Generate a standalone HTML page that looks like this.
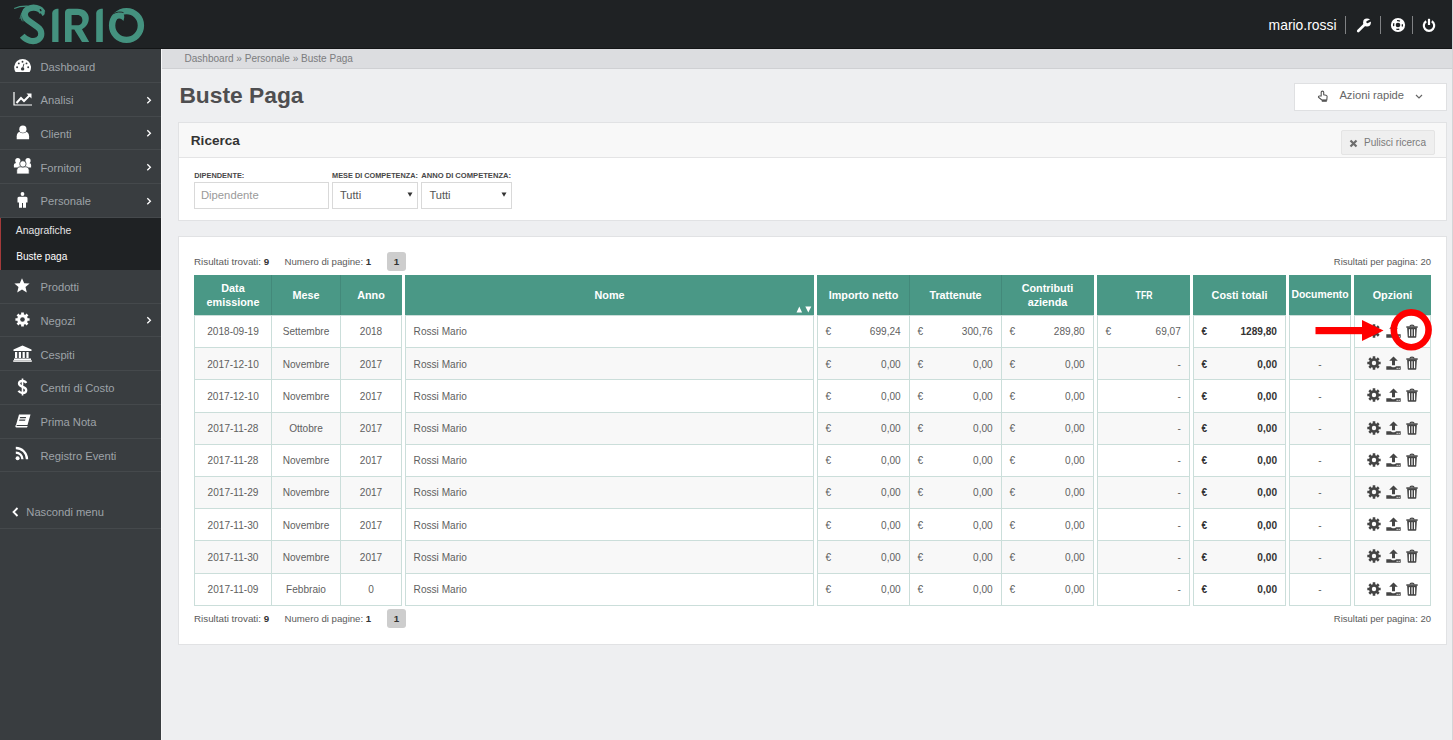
<!DOCTYPE html>
<html><head><meta charset="utf-8"><title>Buste Paga</title>
<style>
html,body{margin:0;padding:0;}
body{width:1453px;height:740px;overflow:hidden;position:relative;background:#eeeff1;font-family:"Liberation Sans", sans-serif;}
.t{position:absolute;white-space:nowrap;}
.r{position:absolute;display:block;}
</style></head><body>
<div class="r" style="left:0px;top:0px;width:1452px;height:48px;background:#1f2224"></div>
<div class="r" style="left:0px;top:48px;width:1452px;height:1px;background:#131516"></div>
<div class="r" style="left:1452px;top:0px;width:1px;height:740px;background:#d4d5d7"></div>
<div class="r" style="left:0px;top:49px;width:161px;height:691px;background:#393d40"></div>
<div class="r" style="left:161px;top:49px;width:1px;height:691px;background:#f7f7f8"></div>
<div class="r" style="left:162px;top:49px;width:1290px;height:19px;background:#dcdde0"></div>
<div class="r" style="left:162px;top:68px;width:1290px;height:1px;background:#cfd0d3"></div>
<svg class="r" style="left:0px;top:0px;" width="160" height="48" viewBox="0 0 160 48">
<path d="M42.5 12.5 C40.5 7.5 33 6.5 28.5 8.8 C23.5 11.3 23.8 17 28 20.3 L37.8 27.3 C42.3 30.6 42.5 36.8 38.2 39.6 C33.5 42.5 26.5 40.8 22.2 35.8" fill="none" stroke="#44927f" stroke-width="6.2"/>
<path d="M37.5 7.2 C41 6.2 44.8 9 44.8 12.8 C44.8 14.5 43.6 15.8 42.4 15.9 C41.2 13.5 39.8 11.8 37.8 10.8 Z" fill="#44927f"/>
<ellipse cx="40.6" cy="10.2" rx="0.8" ry="1.3" fill="#1f2224" transform="rotate(-30 40.6 10.2)"/>
<path d="M14.2 8.6 C18 6.8 23 6 28 6.2" fill="none" stroke="#44927f" stroke-width="1.1"/>
<path d="M25 9 C22 11 21 15 21.5 20.5 M23.5 11 C21.5 13 20.5 16 20 19 M24.5 13.5 C23 16 22.8 18.5 23 21.5" fill="none" stroke="#44927f" stroke-width="1" opacity="0.8"/>
<path d="M52.2 42 L52.2 13.5 C52.2 10.5 54.5 8.8 58.5 8.8 L58.5 42 Z" fill="#44927f"/>
<path fill-rule="evenodd" d="M65 42 L65 12.5 C65 10.3 66.6 8.8 68.8 8.8 L77.5 8.8 C84.5 8.8 88.8 13 88.8 18.3 C88.8 23.3 86.3 27 82 29.3 L89.2 42 L82 42 L74.3 29.5 L71.6 29.5 L71.6 42 Z M71.6 15 L77.3 15 C80.6 15 82.4 17.3 82.4 20.2 C82.4 23.2 80.4 25.3 77.3 25.3 L71.6 25.3 Z" fill="#44927f"/>
<path d="M96.2 42 L96.2 13.5 C96.2 10.5 98.5 8.8 102.8 8.8 L102.8 42 Z" fill="#44927f"/>
<circle cx="126.5" cy="25.5" r="14.4" fill="none" stroke="#44927f" stroke-width="6.4"/>
<path d="M112.3 17.5 C114.5 13.2 119.5 12 122.8 13.6 C124.8 14.6 124.6 18.5 123.3 21 C122 18.3 118.8 17.6 115.8 19.6 Z" fill="#44927f"/>
<path d="M113.2 13.8 C116.5 11.8 120.5 11.6 123.5 12.6" fill="none" stroke="#1f2224" stroke-width="0.9"/>
</svg>
<div class="t" style="left:1268.60px;top:19.03px;font-size:13.9px;line-height:13.9px;color:#ffffff;">mario.rossi</div>
<div class="r" style="left:1345px;top:16px;width:1px;height:18px;background:#808284"></div>
<div class="r" style="left:1380px;top:16px;width:1px;height:18px;background:#808284"></div>
<div class="r" style="left:1412px;top:16px;width:1px;height:18px;background:#808284"></div>
<svg class="r" style="left:1356px;top:17px;" width="16" height="16" viewBox="0 0 16 16"><path d="M2.2 14 L9.5 6.8" stroke="#fff" stroke-width="2.6" stroke-linecap="round"/><circle cx="11" cy="5.5" r="3.9" fill="#fff"/><path d="M11.5 5 L15.5 3" stroke="#1f2224" stroke-width="2.4" stroke-linecap="round"/></svg>
<svg class="r" style="left:1390px;top:17px;" width="16" height="16" viewBox="0 0 16 16"><circle cx="8" cy="8" r="7.1" fill="#fff"/><circle cx="8" cy="8" r="4.4" fill="none" stroke="#1f2224" stroke-width="1.3" stroke-dasharray="3 3.91" stroke-dashoffset="1.5"/><circle cx="8" cy="8" r="2.3" fill="#1f2224"/></svg>
<svg class="r" style="left:1422px;top:18px;" width="14" height="14" viewBox="0 0 14 14"><path d="M4.2 3.2 A5.2 5.2 0 1 0 9.8 3.2" fill="none" stroke="#fff" stroke-width="2.2"/><path d="M7 0.8 L7 7" stroke="#fff" stroke-width="2.2"/></svg>
<div class="t" style="left:40.50px;top:61.52px;font-size:11.2px;line-height:11.2px;color:#9ea3a8;">Dashboard</div>
<div class="r" style="left:0px;top:82px;width:161px;height:1px;background:#45494c"></div>
<div class="t" style="left:40.50px;top:95.22px;font-size:11.2px;line-height:11.2px;color:#9ea3a8;">Analisi</div>
<div class="r" style="left:0px;top:116px;width:161px;height:1px;background:#45494c"></div>
<svg class="r" style="left:146px;top:96px;" width="6" height="8" viewBox="0 0 6 8"><path d="M1.3 1.2 L4.4 4.2 L1.3 7.2" fill="none" stroke="#fff" stroke-width="1.3"/></svg>
<div class="t" style="left:40.50px;top:128.92px;font-size:11.2px;line-height:11.2px;color:#9ea3a8;">Clienti</div>
<div class="r" style="left:0px;top:149px;width:161px;height:1px;background:#45494c"></div>
<svg class="r" style="left:146px;top:129px;" width="6" height="8" viewBox="0 0 6 8"><path d="M1.3 1.2 L4.4 4.2 L1.3 7.2" fill="none" stroke="#fff" stroke-width="1.3"/></svg>
<div class="t" style="left:40.50px;top:162.62px;font-size:11.2px;line-height:11.2px;color:#9ea3a8;">Fornitori</div>
<div class="r" style="left:0px;top:183px;width:161px;height:1px;background:#45494c"></div>
<svg class="r" style="left:146px;top:163px;" width="6" height="8" viewBox="0 0 6 8"><path d="M1.3 1.2 L4.4 4.2 L1.3 7.2" fill="none" stroke="#fff" stroke-width="1.3"/></svg>
<div class="t" style="left:40.50px;top:196.32px;font-size:11.2px;line-height:11.2px;color:#9ea3a8;">Personale</div>
<div class="r" style="left:0px;top:217px;width:161px;height:1px;background:#45494c"></div>
<svg class="r" style="left:146px;top:197px;" width="6" height="8" viewBox="0 0 6 8"><path d="M1.3 1.2 L4.4 4.2 L1.3 7.2" fill="none" stroke="#fff" stroke-width="1.3"/></svg>
<div class="t" style="left:40.50px;top:282.22px;font-size:11.2px;line-height:11.2px;color:#9ea3a8;">Prodotti</div>
<div class="r" style="left:0px;top:303px;width:161px;height:1px;background:#45494c"></div>
<div class="t" style="left:40.50px;top:315.92px;font-size:11.2px;line-height:11.2px;color:#9ea3a8;">Negozi</div>
<div class="r" style="left:0px;top:336px;width:161px;height:1px;background:#45494c"></div>
<svg class="r" style="left:146px;top:316px;" width="6" height="8" viewBox="0 0 6 8"><path d="M1.3 1.2 L4.4 4.2 L1.3 7.2" fill="none" stroke="#fff" stroke-width="1.3"/></svg>
<div class="t" style="left:40.50px;top:349.62px;font-size:11.2px;line-height:11.2px;color:#9ea3a8;">Cespiti</div>
<div class="r" style="left:0px;top:370px;width:161px;height:1px;background:#45494c"></div>
<div class="t" style="left:40.50px;top:383.32px;font-size:11.2px;line-height:11.2px;color:#9ea3a8;">Centri di Costo</div>
<div class="r" style="left:0px;top:404px;width:161px;height:1px;background:#45494c"></div>
<div class="t" style="left:40.50px;top:417.02px;font-size:11.2px;line-height:11.2px;color:#9ea3a8;">Prima Nota</div>
<div class="r" style="left:0px;top:438px;width:161px;height:1px;background:#45494c"></div>
<div class="t" style="left:40.50px;top:450.72px;font-size:11.2px;line-height:11.2px;color:#9ea3a8;">Registro Eventi</div>
<div class="r" style="left:0px;top:471px;width:161px;height:1px;background:#45494c"></div>
<div class="r" style="left:0px;top:218px;width:161px;height:52px;background:#1f2224"></div>
<div class="r" style="left:0px;top:218px;width:1px;height:52px;background:#a33a3a"></div>
<div class="t" style="left:15.80px;top:226.10px;font-size:10.4px;line-height:10.4px;color:#e4e4e4;">Anagrafiche</div>
<div class="t" style="left:16.20px;top:252.25px;font-size:10.1px;line-height:10.1px;color:#ffffff;">Buste paga</div>
<div class="t" style="left:26.30px;top:507.02px;font-size:11.2px;line-height:11.2px;color:#9ea3a8;">Nascondi menu</div>
<svg class="r" style="left:12px;top:507px;" width="7" height="10" viewBox="0 0 7 10"><path d="M5.5 1 L1.5 5 L5.5 9" fill="none" stroke="#fff" stroke-width="1.8"/></svg>
<div class="r" style="left:0px;top:528px;width:161px;height:1px;background:#45494c"></div>
<svg class="r" style="left:14px;top:59px;" width="18" height="14" viewBox="0 0 18 14"><path d="M1.57 13 A8.4 8.4 0 1 1 15.63 13 Z" fill="#ffffff"/><circle cx="8.5" cy="2.7" r="0.95" fill="#393d40"/><circle cx="4.8" cy="4.4" r="0.95" fill="#393d40"/><circle cx="12.5" cy="4.4" r="0.95" fill="#393d40"/><circle cx="3.1" cy="8.2" r="0.95" fill="#393d40"/><circle cx="14.2" cy="8.2" r="0.95" fill="#393d40"/><path d="M8.6 9.9 L9.9 4.8" stroke="#393d40" stroke-width="0.9"/><circle cx="8.6" cy="9.9" r="1.7" fill="#393d40"/></svg>
<svg class="r" style="left:13px;top:92px;" width="20" height="14" viewBox="0 0 20 14"><path d="M1 0 L1 13 L19 13" fill="none" stroke="#ffffff" stroke-width="1.2"/><path d="M3.5 11 L8 6 L11 9 L16.5 3.5" fill="none" stroke="#ffffff" stroke-width="2"/><path d="M13.5 1.5 L18.5 1.5 L18.5 6.5 Z" fill="#ffffff"/></svg>
<svg class="r" style="left:16px;top:125px;" width="14" height="15" viewBox="0 0 14 15"><path d="M0.7 14.2 L0.7 11.2 C0.7 8.3 2.6 6.6 5 6.6 L8.8 6.6 C11.2 6.6 13.1 8.3 13.1 11.2 L13.1 14.2 Z" fill="#ffffff"/><circle cx="6.9" cy="4.2" r="4.1" fill="#393d40"/><circle cx="6.9" cy="4.2" r="3.6" fill="#ffffff"/></svg>
<svg class="r" style="left:13px;top:157px;" width="19" height="18" viewBox="0 0 19 18"><circle cx="4.8" cy="3.7" r="2.6" fill="#ffffff"/><circle cx="15" cy="3.7" r="2.6" fill="#ffffff"/><path d="M0.9 10.5 L0.9 8.3 C0.9 6.8 2 6 3.2 6 L16 6 C17.2 6 18.1 6.8 18.1 8.3 L18.1 10.5 Z" fill="#ffffff"/><path d="M3.7 17 L3.7 13.5 C3.7 11.2 5.2 9.8 7.2 9.8 L12.7 9.8 C14.7 9.8 16.2 11.2 16.2 13.5 L16.2 17 Z" fill="#ffffff" stroke="#393d40" stroke-width="0.8"/><circle cx="9.9" cy="6.9" r="3.2" fill="#ffffff" stroke="#393d40" stroke-width="0.8"/></svg>
<svg class="r" style="left:17px;top:192px;" width="11" height="16" viewBox="0 0 11 16"><circle cx="5.5" cy="2" r="1.9" fill="#ffffff"/><path d="M2 4.8 L9 4.8 C10 4.8 10.5 5.5 10.5 6.5 L10.5 10.5 L9 10.5 L9 15.8 L6 15.8 L6 11 L5 11 L5 15.8 L2 15.8 L2 10.5 L0.5 10.5 L0.5 6.5 C0.5 5.5 1 4.8 2 4.8 Z" fill="#ffffff"/></svg>
<svg class="r" style="left:14px;top:278px;" width="16" height="15" viewBox="0 0 16 15"><path d="M8 0.3 L10.2 5.2 L15.6 5.6 L11.5 9.1 L12.8 14.5 L8 11.6 L3.2 14.5 L4.5 9.1 L0.4 5.6 L5.8 5.2 Z" fill="#ffffff"/></svg>
<svg class="r" style="left:15px;top:312px;" width="15" height="15" viewBox="0 0 15 15"><path d="M12.62 6.14 L14.57 6.14 L14.57 8.86 L12.62 8.86 L12.40 9.53 L12.09 10.16 L13.46 11.54 L11.54 13.46 L10.16 12.09 L9.53 12.40 L8.86 12.62 L8.86 14.57 L6.14 14.57 L6.14 12.62 L5.47 12.40 L4.84 12.09 L3.46 13.46 L1.54 11.54 L2.91 10.16 L2.60 9.53 L2.38 8.86 L0.43 8.86 L0.43 6.14 L2.38 6.14 L2.60 5.47 L2.91 4.84 L1.54 3.46 L3.46 1.54 L4.84 2.91 L5.47 2.60 L6.14 2.38 L6.14 0.43 L8.86 0.43 L8.86 2.38 L9.53 2.60 L10.16 2.91 L11.54 1.54 L13.46 3.46 L12.09 4.84 L12.40 5.47 Z" fill="#ffffff"/><circle cx="7.5" cy="7.5" r="2.3" fill="#393d40"/></svg>
<svg class="r" style="left:13px;top:345px;" width="19" height="17" viewBox="0 0 19 17"><path d="M9.5 0.5 L18.5 4.5 L18.5 6 L0.5 6 L0.5 4.5 Z" fill="#ffffff"/><rect x="2" y="7" width="2.2" height="6" fill="#ffffff"/><rect x="5.8" y="7" width="2.2" height="6" fill="#ffffff"/><rect x="9.6" y="7" width="2.2" height="6" fill="#ffffff"/><rect x="13.4" y="7" width="2.2" height="6" fill="#ffffff"/><rect x="1" y="13.5" width="17" height="1.5" fill="#ffffff"/><rect x="0.2" y="15.3" width="18.6" height="1.5" fill="#ffffff"/></svg>
<svg class="r" style="left:17px;top:378px;" width="11" height="18" viewBox="0 0 11 18"><path d="M5.5 0.5 L5.5 17.5" stroke="#ffffff" stroke-width="1.6"/><path d="M9.2 5 C8.5 3.5 7.2 2.8 5.5 2.8 C3.3 2.8 2 4 2 5.6 C2 7.4 3.5 8.1 5.5 8.8 C7.7 9.5 9.2 10.3 9.2 12.2 C9.2 13.9 7.7 15 5.5 15 C3.7 15 2.3 14.2 1.5 12.8" fill="none" stroke="#ffffff" stroke-width="2.3"/></svg>
<svg class="r" style="left:15px;top:414px;" width="16" height="14" viewBox="0 0 16 14"><path d="M4 0.5 L15.5 0.5 L12.5 11 L1 11 Z" fill="#ffffff"/><path d="M1 11 C0 11.5 0.2 13.5 1.5 13.5 L12 13.5 L12.7 12 L2 12 C1.5 12 1.4 11.3 1.8 11 Z" fill="#ffffff"/><rect x="6" y="3" width="6" height="1.3" fill="#393d40" transform="skewX(-16)"/><rect x="6" y="5.5" width="6" height="1.3" fill="#393d40" transform="skewX(-16)"/></svg>
<svg class="r" style="left:15px;top:446px;" width="15" height="15" viewBox="0 0 15 15"><circle cx="2.6" cy="12.3" r="2" fill="#ffffff"/><path d="M0.8 6.6 A6.6 6.6 0 0 1 7.4 13.2" fill="none" stroke="#ffffff" stroke-width="2.3"/><path d="M0.8 2 A11.2 11.2 0 0 1 12 13.2" fill="none" stroke="#ffffff" stroke-width="2.3"/></svg>
<div class="t" style="left:179.40px;top:84.40px;font-size:22.8px;line-height:22.8px;color:#4e4e50;font-weight:bold;">Buste Paga</div>
<div class="t" style="left:184.50px;top:53.50px;font-size:10.04px;line-height:10.04px;color:#7b7c7e;">Dashboard » Personale » Buste Paga</div>
<div class="r" style="left:1294px;top:83px;width:153px;height:28px;background:#fff;border:1px solid #dfe0e2;box-sizing:border-box"></div>
<div class="t" style="left:1339.40px;top:90.42px;font-size:11.2px;line-height:11.2px;color:#666;">Azioni rapide</div>
<svg class="r" style="left:1316px;top:89px;" width="14" height="14" viewBox="0 0 14 14"><path d="M5.2 7 L5.2 3.2 C5.2 1.8 7.7 1.8 7.7 3.2 L7.7 5.8 L10 6.2 C10.8 6.4 11.1 6.8 11.1 7.6 L10.8 11 L5.8 11 L2.8 8.5 C2 7.8 2.6 6.8 3.6 7 Z" fill="none" stroke="#555" stroke-width="1.1"/><rect x="5.8" y="10.8" width="5" height="2" fill="#555"/></svg>
<svg class="r" style="left:1415px;top:94px;" width="8" height="6" viewBox="0 0 8 6"><path d="M1 1 L4 4 L7 1" fill="none" stroke="#666" stroke-width="1.2"/></svg>
<div class="r" style="left:178px;top:122px;width:1269px;height:99px;background:#fff;border:1px solid #e1e2e4;box-sizing:border-box"></div>
<div class="r" style="left:179px;top:123px;width:1267px;height:34px;background:#f8f8f8"></div>
<div class="r" style="left:179px;top:157px;width:1267px;height:1px;background:#e4e4e5"></div>
<div class="t" style="left:190.80px;top:133.69px;font-size:13.6px;line-height:13.6px;color:#333;font-weight:bold;">Ricerca</div>
<div class="r" style="left:1341px;top:130px;width:94px;height:25px;background:#efefef;border:1px solid #e4e4e4;box-sizing:border-box;border-radius:2px"></div>
<div class="t" style="left:1364.00px;top:137.69px;font-size:10.05px;line-height:10.05px;color:#7a7a7a;">Pulisci ricerca</div>
<svg class="r" style="left:1349px;top:139px;" width="9" height="9" viewBox="0 0 9 9"><path d="M1.5 1.5 L7.5 7.5 M7.5 1.5 L1.5 7.5" stroke="#6d6d6d" stroke-width="2.2"/></svg>
<div class="t" style="left:194.20px;top:171.94px;font-size:7.4px;line-height:7.4px;color:#474747;font-weight:bold;">DIPENDENTE:</div>
<div class="t" style="left:332.10px;top:171.99px;font-size:7.34px;line-height:7.34px;color:#474747;font-weight:bold;">MESE DI COMPETENZA:</div>
<div class="t" style="left:421.20px;top:171.77px;font-size:7.6px;line-height:7.6px;color:#474747;font-weight:bold;">ANNO DI COMPETENZA:</div>
<div class="r" style="left:194px;top:182px;width:135px;height:27px;background:#fff;border:1px solid #d9d9d9;box-sizing:border-box"></div>
<div class="t" style="left:200.90px;top:190.13px;font-size:11.3px;line-height:11.3px;color:#9a9a9a;">Dipendente</div>
<div class="r" style="left:332px;top:182px;width:86px;height:27px;background:#fff;border:1px solid #d9d9d9;box-sizing:border-box"></div>
<div class="t" style="left:340.00px;top:190.20px;font-size:11.1px;line-height:11.1px;color:#555;">Tutti</div>
<svg class="r" style="left:407px;top:192px;" width="6" height="5" viewBox="0 0 6 5"><path d="M0.5 0.5 L5.5 0.5 L3 4.8 Z" fill="#333"/></svg>
<div class="r" style="left:421px;top:182px;width:91px;height:27px;background:#fff;border:1px solid #d9d9d9;box-sizing:border-box"></div>
<div class="t" style="left:429.40px;top:190.20px;font-size:11.1px;line-height:11.1px;color:#555;">Tutti</div>
<svg class="r" style="left:501px;top:192px;" width="6" height="5" viewBox="0 0 6 5"><path d="M0.5 0.5 L5.5 0.5 L3 4.8 Z" fill="#333"/></svg>
<div class="r" style="left:178px;top:236px;width:1269px;height:409px;background:#fff;border:1px solid #e1e2e4;box-sizing:border-box"></div>
<div class="t" style="left:194.00px;top:256.60px;font-size:9.8px;line-height:9.8px;color:#5a5a5a;">Risultati trovati: <b style="color:#333">9</b></div>
<div class="t" style="left:284.50px;top:256.73px;font-size:9.65px;line-height:9.65px;color:#5a5a5a;">Numero di pagine: <b style="color:#333">1</b></div>
<div class="r" style="left:387px;top:252px;width:19px;height:19px;background:#cdcdcd;border-radius:3px"></div>
<div class="t" style="left:196.50px;width:400px;text-align:center;top:256.60px;font-size:9.8px;line-height:9.8px;color:#333;font-weight:bold;">1</div>
<div class="t" style="right:22.00px;top:256.86px;font-size:9.5px;line-height:9.5px;color:#5a5a5a;">Risultati per pagina: 20</div>
<div class="t" style="left:194.00px;top:613.80px;font-size:9.8px;line-height:9.8px;color:#5a5a5a;">Risultati trovati: <b style="color:#333">9</b></div>
<div class="t" style="left:284.50px;top:613.93px;font-size:9.65px;line-height:9.65px;color:#5a5a5a;">Numero di pagine: <b style="color:#333">1</b></div>
<div class="r" style="left:387px;top:609px;width:19px;height:19px;background:#cdcdcd;border-radius:3px"></div>
<div class="t" style="left:196.50px;width:400px;text-align:center;top:613.80px;font-size:9.8px;line-height:9.8px;color:#333;font-weight:bold;">1</div>
<div class="t" style="right:22.00px;top:614.06px;font-size:9.5px;line-height:9.5px;color:#5a5a5a;">Risultati per pagina: 20</div>
<div class="r" style="left:194px;top:275px;width:208px;height:40px;background:#4a9886"></div>
<div class="r" style="left:405px;top:275px;width:409px;height:40px;background:#4a9886"></div>
<div class="r" style="left:817px;top:275px;width:277px;height:40px;background:#4a9886"></div>
<div class="r" style="left:1097px;top:275px;width:93px;height:40px;background:#4a9886"></div>
<div class="r" style="left:1193px;top:275px;width:93px;height:40px;background:#4a9886"></div>
<div class="r" style="left:1289px;top:275px;width:62px;height:40px;background:#4a9886"></div>
<div class="r" style="left:1354px;top:275px;width:77px;height:40px;background:#4a9886"></div>
<div class="r" style="left:271px;top:275px;width:1px;height:40px;background:#43897a"></div>
<div class="r" style="left:340px;top:275px;width:1px;height:40px;background:#43897a"></div>
<div class="r" style="left:909px;top:275px;width:1px;height:40px;background:#43897a"></div>
<div class="r" style="left:1001px;top:275px;width:1px;height:40px;background:#43897a"></div>
<div class="r" style="left:194px;top:315px;width:208px;height:32px;background:#ffffff"></div>
<div class="r" style="left:405px;top:315px;width:409px;height:32px;background:#ffffff"></div>
<div class="r" style="left:817px;top:315px;width:277px;height:32px;background:#ffffff"></div>
<div class="r" style="left:1097px;top:315px;width:93px;height:32px;background:#ffffff"></div>
<div class="r" style="left:1193px;top:315px;width:93px;height:32px;background:#ffffff"></div>
<div class="r" style="left:1289px;top:315px;width:62px;height:32px;background:#ffffff"></div>
<div class="r" style="left:1354px;top:315px;width:77px;height:32px;background:#ffffff"></div>
<div class="r" style="left:194px;top:347px;width:208px;height:32px;background:#f8f8f8"></div>
<div class="r" style="left:405px;top:347px;width:409px;height:32px;background:#f8f8f8"></div>
<div class="r" style="left:817px;top:347px;width:277px;height:32px;background:#f8f8f8"></div>
<div class="r" style="left:1097px;top:347px;width:93px;height:32px;background:#f8f8f8"></div>
<div class="r" style="left:1193px;top:347px;width:93px;height:32px;background:#f8f8f8"></div>
<div class="r" style="left:1289px;top:347px;width:62px;height:32px;background:#f8f8f8"></div>
<div class="r" style="left:1354px;top:347px;width:77px;height:32px;background:#f8f8f8"></div>
<div class="r" style="left:194px;top:379px;width:208px;height:33px;background:#ffffff"></div>
<div class="r" style="left:405px;top:379px;width:409px;height:33px;background:#ffffff"></div>
<div class="r" style="left:817px;top:379px;width:277px;height:33px;background:#ffffff"></div>
<div class="r" style="left:1097px;top:379px;width:93px;height:33px;background:#ffffff"></div>
<div class="r" style="left:1193px;top:379px;width:93px;height:33px;background:#ffffff"></div>
<div class="r" style="left:1289px;top:379px;width:62px;height:33px;background:#ffffff"></div>
<div class="r" style="left:1354px;top:379px;width:77px;height:33px;background:#ffffff"></div>
<div class="r" style="left:194px;top:412px;width:208px;height:32px;background:#f8f8f8"></div>
<div class="r" style="left:405px;top:412px;width:409px;height:32px;background:#f8f8f8"></div>
<div class="r" style="left:817px;top:412px;width:277px;height:32px;background:#f8f8f8"></div>
<div class="r" style="left:1097px;top:412px;width:93px;height:32px;background:#f8f8f8"></div>
<div class="r" style="left:1193px;top:412px;width:93px;height:32px;background:#f8f8f8"></div>
<div class="r" style="left:1289px;top:412px;width:62px;height:32px;background:#f8f8f8"></div>
<div class="r" style="left:1354px;top:412px;width:77px;height:32px;background:#f8f8f8"></div>
<div class="r" style="left:194px;top:444px;width:208px;height:32px;background:#ffffff"></div>
<div class="r" style="left:405px;top:444px;width:409px;height:32px;background:#ffffff"></div>
<div class="r" style="left:817px;top:444px;width:277px;height:32px;background:#ffffff"></div>
<div class="r" style="left:1097px;top:444px;width:93px;height:32px;background:#ffffff"></div>
<div class="r" style="left:1193px;top:444px;width:93px;height:32px;background:#ffffff"></div>
<div class="r" style="left:1289px;top:444px;width:62px;height:32px;background:#ffffff"></div>
<div class="r" style="left:1354px;top:444px;width:77px;height:32px;background:#ffffff"></div>
<div class="r" style="left:194px;top:476px;width:208px;height:32px;background:#f8f8f8"></div>
<div class="r" style="left:405px;top:476px;width:409px;height:32px;background:#f8f8f8"></div>
<div class="r" style="left:817px;top:476px;width:277px;height:32px;background:#f8f8f8"></div>
<div class="r" style="left:1097px;top:476px;width:93px;height:32px;background:#f8f8f8"></div>
<div class="r" style="left:1193px;top:476px;width:93px;height:32px;background:#f8f8f8"></div>
<div class="r" style="left:1289px;top:476px;width:62px;height:32px;background:#f8f8f8"></div>
<div class="r" style="left:1354px;top:476px;width:77px;height:32px;background:#f8f8f8"></div>
<div class="r" style="left:194px;top:508px;width:208px;height:32px;background:#ffffff"></div>
<div class="r" style="left:405px;top:508px;width:409px;height:32px;background:#ffffff"></div>
<div class="r" style="left:817px;top:508px;width:277px;height:32px;background:#ffffff"></div>
<div class="r" style="left:1097px;top:508px;width:93px;height:32px;background:#ffffff"></div>
<div class="r" style="left:1193px;top:508px;width:93px;height:32px;background:#ffffff"></div>
<div class="r" style="left:1289px;top:508px;width:62px;height:32px;background:#ffffff"></div>
<div class="r" style="left:1354px;top:508px;width:77px;height:32px;background:#ffffff"></div>
<div class="r" style="left:194px;top:540px;width:208px;height:33px;background:#f8f8f8"></div>
<div class="r" style="left:405px;top:540px;width:409px;height:33px;background:#f8f8f8"></div>
<div class="r" style="left:817px;top:540px;width:277px;height:33px;background:#f8f8f8"></div>
<div class="r" style="left:1097px;top:540px;width:93px;height:33px;background:#f8f8f8"></div>
<div class="r" style="left:1193px;top:540px;width:93px;height:33px;background:#f8f8f8"></div>
<div class="r" style="left:1289px;top:540px;width:62px;height:33px;background:#f8f8f8"></div>
<div class="r" style="left:1354px;top:540px;width:77px;height:33px;background:#f8f8f8"></div>
<div class="r" style="left:194px;top:573px;width:208px;height:32px;background:#ffffff"></div>
<div class="r" style="left:405px;top:573px;width:409px;height:32px;background:#ffffff"></div>
<div class="r" style="left:817px;top:573px;width:277px;height:32px;background:#ffffff"></div>
<div class="r" style="left:1097px;top:573px;width:93px;height:32px;background:#ffffff"></div>
<div class="r" style="left:1193px;top:573px;width:93px;height:32px;background:#ffffff"></div>
<div class="r" style="left:1289px;top:573px;width:62px;height:32px;background:#ffffff"></div>
<div class="r" style="left:1354px;top:573px;width:77px;height:32px;background:#ffffff"></div>
<div class="r" style="left:194px;top:315px;width:208px;height:1px;background:#cbdeda"></div>
<div class="r" style="left:405px;top:315px;width:409px;height:1px;background:#cbdeda"></div>
<div class="r" style="left:817px;top:315px;width:277px;height:1px;background:#cbdeda"></div>
<div class="r" style="left:1097px;top:315px;width:93px;height:1px;background:#cbdeda"></div>
<div class="r" style="left:1193px;top:315px;width:93px;height:1px;background:#cbdeda"></div>
<div class="r" style="left:1289px;top:315px;width:62px;height:1px;background:#cbdeda"></div>
<div class="r" style="left:1354px;top:315px;width:77px;height:1px;background:#cbdeda"></div>
<div class="r" style="left:194px;top:347px;width:208px;height:1px;background:#cbdeda"></div>
<div class="r" style="left:405px;top:347px;width:409px;height:1px;background:#cbdeda"></div>
<div class="r" style="left:817px;top:347px;width:277px;height:1px;background:#cbdeda"></div>
<div class="r" style="left:1097px;top:347px;width:93px;height:1px;background:#cbdeda"></div>
<div class="r" style="left:1193px;top:347px;width:93px;height:1px;background:#cbdeda"></div>
<div class="r" style="left:1289px;top:347px;width:62px;height:1px;background:#cbdeda"></div>
<div class="r" style="left:1354px;top:347px;width:77px;height:1px;background:#cbdeda"></div>
<div class="r" style="left:194px;top:379px;width:208px;height:1px;background:#cbdeda"></div>
<div class="r" style="left:405px;top:379px;width:409px;height:1px;background:#cbdeda"></div>
<div class="r" style="left:817px;top:379px;width:277px;height:1px;background:#cbdeda"></div>
<div class="r" style="left:1097px;top:379px;width:93px;height:1px;background:#cbdeda"></div>
<div class="r" style="left:1193px;top:379px;width:93px;height:1px;background:#cbdeda"></div>
<div class="r" style="left:1289px;top:379px;width:62px;height:1px;background:#cbdeda"></div>
<div class="r" style="left:1354px;top:379px;width:77px;height:1px;background:#cbdeda"></div>
<div class="r" style="left:194px;top:412px;width:208px;height:1px;background:#cbdeda"></div>
<div class="r" style="left:405px;top:412px;width:409px;height:1px;background:#cbdeda"></div>
<div class="r" style="left:817px;top:412px;width:277px;height:1px;background:#cbdeda"></div>
<div class="r" style="left:1097px;top:412px;width:93px;height:1px;background:#cbdeda"></div>
<div class="r" style="left:1193px;top:412px;width:93px;height:1px;background:#cbdeda"></div>
<div class="r" style="left:1289px;top:412px;width:62px;height:1px;background:#cbdeda"></div>
<div class="r" style="left:1354px;top:412px;width:77px;height:1px;background:#cbdeda"></div>
<div class="r" style="left:194px;top:444px;width:208px;height:1px;background:#cbdeda"></div>
<div class="r" style="left:405px;top:444px;width:409px;height:1px;background:#cbdeda"></div>
<div class="r" style="left:817px;top:444px;width:277px;height:1px;background:#cbdeda"></div>
<div class="r" style="left:1097px;top:444px;width:93px;height:1px;background:#cbdeda"></div>
<div class="r" style="left:1193px;top:444px;width:93px;height:1px;background:#cbdeda"></div>
<div class="r" style="left:1289px;top:444px;width:62px;height:1px;background:#cbdeda"></div>
<div class="r" style="left:1354px;top:444px;width:77px;height:1px;background:#cbdeda"></div>
<div class="r" style="left:194px;top:476px;width:208px;height:1px;background:#cbdeda"></div>
<div class="r" style="left:405px;top:476px;width:409px;height:1px;background:#cbdeda"></div>
<div class="r" style="left:817px;top:476px;width:277px;height:1px;background:#cbdeda"></div>
<div class="r" style="left:1097px;top:476px;width:93px;height:1px;background:#cbdeda"></div>
<div class="r" style="left:1193px;top:476px;width:93px;height:1px;background:#cbdeda"></div>
<div class="r" style="left:1289px;top:476px;width:62px;height:1px;background:#cbdeda"></div>
<div class="r" style="left:1354px;top:476px;width:77px;height:1px;background:#cbdeda"></div>
<div class="r" style="left:194px;top:508px;width:208px;height:1px;background:#cbdeda"></div>
<div class="r" style="left:405px;top:508px;width:409px;height:1px;background:#cbdeda"></div>
<div class="r" style="left:817px;top:508px;width:277px;height:1px;background:#cbdeda"></div>
<div class="r" style="left:1097px;top:508px;width:93px;height:1px;background:#cbdeda"></div>
<div class="r" style="left:1193px;top:508px;width:93px;height:1px;background:#cbdeda"></div>
<div class="r" style="left:1289px;top:508px;width:62px;height:1px;background:#cbdeda"></div>
<div class="r" style="left:1354px;top:508px;width:77px;height:1px;background:#cbdeda"></div>
<div class="r" style="left:194px;top:540px;width:208px;height:1px;background:#cbdeda"></div>
<div class="r" style="left:405px;top:540px;width:409px;height:1px;background:#cbdeda"></div>
<div class="r" style="left:817px;top:540px;width:277px;height:1px;background:#cbdeda"></div>
<div class="r" style="left:1097px;top:540px;width:93px;height:1px;background:#cbdeda"></div>
<div class="r" style="left:1193px;top:540px;width:93px;height:1px;background:#cbdeda"></div>
<div class="r" style="left:1289px;top:540px;width:62px;height:1px;background:#cbdeda"></div>
<div class="r" style="left:1354px;top:540px;width:77px;height:1px;background:#cbdeda"></div>
<div class="r" style="left:194px;top:573px;width:208px;height:1px;background:#cbdeda"></div>
<div class="r" style="left:405px;top:573px;width:409px;height:1px;background:#cbdeda"></div>
<div class="r" style="left:817px;top:573px;width:277px;height:1px;background:#cbdeda"></div>
<div class="r" style="left:1097px;top:573px;width:93px;height:1px;background:#cbdeda"></div>
<div class="r" style="left:1193px;top:573px;width:93px;height:1px;background:#cbdeda"></div>
<div class="r" style="left:1289px;top:573px;width:62px;height:1px;background:#cbdeda"></div>
<div class="r" style="left:1354px;top:573px;width:77px;height:1px;background:#cbdeda"></div>
<div class="r" style="left:194px;top:605px;width:208px;height:1px;background:#cbdeda"></div>
<div class="r" style="left:405px;top:605px;width:409px;height:1px;background:#cbdeda"></div>
<div class="r" style="left:817px;top:605px;width:277px;height:1px;background:#cbdeda"></div>
<div class="r" style="left:1097px;top:605px;width:93px;height:1px;background:#cbdeda"></div>
<div class="r" style="left:1193px;top:605px;width:93px;height:1px;background:#cbdeda"></div>
<div class="r" style="left:1289px;top:605px;width:62px;height:1px;background:#cbdeda"></div>
<div class="r" style="left:1354px;top:605px;width:77px;height:1px;background:#cbdeda"></div>
<div class="r" style="left:194px;top:315px;width:1px;height:291px;background:#cbdeda"></div>
<div class="r" style="left:271px;top:315px;width:1px;height:291px;background:#cbdeda"></div>
<div class="r" style="left:271px;top:315px;width:1px;height:291px;background:#cbdeda"></div>
<div class="r" style="left:340px;top:315px;width:1px;height:291px;background:#cbdeda"></div>
<div class="r" style="left:340px;top:315px;width:1px;height:291px;background:#cbdeda"></div>
<div class="r" style="left:401px;top:315px;width:1px;height:291px;background:#cbdeda"></div>
<div class="r" style="left:405px;top:315px;width:1px;height:291px;background:#cbdeda"></div>
<div class="r" style="left:813px;top:315px;width:1px;height:291px;background:#cbdeda"></div>
<div class="r" style="left:817px;top:315px;width:1px;height:291px;background:#cbdeda"></div>
<div class="r" style="left:909px;top:315px;width:1px;height:291px;background:#cbdeda"></div>
<div class="r" style="left:909px;top:315px;width:1px;height:291px;background:#cbdeda"></div>
<div class="r" style="left:1001px;top:315px;width:1px;height:291px;background:#cbdeda"></div>
<div class="r" style="left:1001px;top:315px;width:1px;height:291px;background:#cbdeda"></div>
<div class="r" style="left:1093px;top:315px;width:1px;height:291px;background:#cbdeda"></div>
<div class="r" style="left:1097px;top:315px;width:1px;height:291px;background:#cbdeda"></div>
<div class="r" style="left:1189px;top:315px;width:1px;height:291px;background:#cbdeda"></div>
<div class="r" style="left:1193px;top:315px;width:1px;height:291px;background:#cbdeda"></div>
<div class="r" style="left:1285px;top:315px;width:1px;height:291px;background:#cbdeda"></div>
<div class="r" style="left:1289px;top:315px;width:1px;height:291px;background:#cbdeda"></div>
<div class="r" style="left:1350px;top:315px;width:1px;height:291px;background:#cbdeda"></div>
<div class="r" style="left:1354px;top:315px;width:1px;height:291px;background:#cbdeda"></div>
<div class="r" style="left:1430px;top:315px;width:1px;height:291px;background:#cbdeda"></div>
<div class="t" style="left:33.00px;width:400px;text-align:center;top:283.06px;font-size:10.8px;line-height:10.8px;color:#fff;font-weight:bold;">Data</div>
<div class="t" style="left:33.00px;width:400px;text-align:center;top:296.66px;font-size:10.8px;line-height:10.8px;color:#fff;font-weight:bold;">emissione</div>
<div class="t" style="left:106.00px;width:400px;text-align:center;top:289.96px;font-size:10.8px;line-height:10.8px;color:#fff;font-weight:bold;">Mese</div>
<div class="t" style="left:171.00px;width:400px;text-align:center;top:289.96px;font-size:10.8px;line-height:10.8px;color:#fff;font-weight:bold;">Anno</div>
<div class="t" style="left:409.50px;width:400px;text-align:center;top:289.96px;font-size:10.8px;line-height:10.8px;color:#fff;font-weight:bold;">Nome</div>
<div class="t" style="left:663.50px;width:400px;text-align:center;top:289.96px;font-size:10.8px;line-height:10.8px;color:#fff;font-weight:bold;">Importo netto</div>
<div class="t" style="left:755.50px;width:400px;text-align:center;top:289.96px;font-size:10.8px;line-height:10.8px;color:#fff;font-weight:bold;">Trattenute</div>
<div class="t" style="left:847.50px;width:400px;text-align:center;top:283.06px;font-size:10.8px;line-height:10.8px;color:#fff;font-weight:bold;">Contributi</div>
<div class="t" style="left:847.50px;width:400px;text-align:center;top:296.66px;font-size:10.8px;line-height:10.8px;color:#fff;font-weight:bold;">azienda</div>
<div class="t" style="left:943.50px;width:400px;text-align:center;top:289.96px;font-size:10.8px;line-height:10.8px;color:#fff;font-weight:bold;transform:scaleX(0.8);">TFR</div>
<div class="t" style="left:1039.50px;width:400px;text-align:center;top:289.96px;font-size:10.8px;line-height:10.8px;color:#fff;font-weight:bold;">Costi totali</div>
<div class="t" style="left:1120.00px;width:400px;text-align:center;top:290.30px;font-size:10.4px;line-height:10.4px;color:#fff;font-weight:bold;">Documento</div>
<div class="t" style="left:1192.50px;width:400px;text-align:center;top:289.96px;font-size:10.8px;line-height:10.8px;color:#fff;font-weight:bold;">Opzioni</div>
<svg class="r" style="left:796px;top:306px;" width="16" height="7" viewBox="0 0 16 7"><path d="M0.5 6.5 L3.3 0.5 L6.1 6.5 Z M9.3 0.5 L15.3 0.5 L12.3 6.5 Z" fill="#fff"/></svg>
<div class="t" style="left:33.00px;width:400px;text-align:center;top:327.45px;font-size:10.1px;line-height:10.1px;color:#5f5f5f;">2018-09-19</div>
<div class="t" style="left:106.00px;width:400px;text-align:center;top:327.45px;font-size:10.1px;line-height:10.1px;color:#5f5f5f;">Settembre</div>
<div class="t" style="left:171.00px;width:400px;text-align:center;top:327.45px;font-size:10.1px;line-height:10.1px;color:#5f5f5f;">2018</div>
<div class="t" style="left:413.60px;top:327.45px;font-size:10.1px;line-height:10.1px;color:#5f5f5f;">Rossi Mario</div>
<div class="t" style="left:825.50px;top:327.45px;font-size:10.1px;line-height:10.1px;color:#5f5f5f;">€</div>
<div class="t" style="right:552.30px;top:327.45px;font-size:10.1px;line-height:10.1px;color:#5f5f5f;">699,24</div>
<div class="t" style="left:917.50px;top:327.45px;font-size:10.1px;line-height:10.1px;color:#5f5f5f;">€</div>
<div class="t" style="right:460.30px;top:327.45px;font-size:10.1px;line-height:10.1px;color:#5f5f5f;">300,76</div>
<div class="t" style="left:1009.50px;top:327.45px;font-size:10.1px;line-height:10.1px;color:#5f5f5f;">€</div>
<div class="t" style="right:368.30px;top:327.45px;font-size:10.1px;line-height:10.1px;color:#5f5f5f;">289,80</div>
<div class="t" style="left:1105.60px;top:327.45px;font-size:10.1px;line-height:10.1px;color:#5f5f5f;">€</div>
<div class="t" style="right:272.20px;top:327.45px;font-size:10.1px;line-height:10.1px;color:#5f5f5f;">69,07</div>
<div class="t" style="left:1201.50px;top:327.45px;font-size:10.1px;line-height:10.1px;color:#333;font-weight:bold;">€</div>
<div class="t" style="right:176.00px;top:327.45px;font-size:10.1px;line-height:10.1px;color:#333;font-weight:bold;">1289,80</div>
<div class="t" style="left:1120.00px;width:400px;text-align:center;top:327.45px;font-size:10.1px;line-height:10.1px;color:#5f5f5f;">-</div>
<svg class="r" style="left:1367px;top:324px" width="14" height="14" viewBox="0 0 14 14"><path d="M11.83 5.71 L13.68 5.72 L13.68 8.28 L11.83 8.29 L11.62 8.91 L11.33 9.51 L12.63 10.81 L10.81 12.63 L9.51 11.33 L8.91 11.62 L8.29 11.83 L8.28 13.68 L5.72 13.68 L5.71 11.83 L5.09 11.62 L4.49 11.33 L3.19 12.63 L1.37 10.81 L2.67 9.51 L2.38 8.91 L2.17 8.29 L0.32 8.28 L0.32 5.72 L2.17 5.71 L2.38 5.09 L2.67 4.49 L1.37 3.19 L3.19 1.37 L4.49 2.67 L5.09 2.38 L5.71 2.17 L5.72 0.32 L8.28 0.32 L8.29 2.17 L8.91 2.38 L9.51 2.67 L10.81 1.37 L12.63 3.19 L11.33 4.49 L11.62 5.09 Z" fill="#444"/><circle cx="7" cy="7" r="2.2" fill="#ffffff"/></svg>
<svg class="r" style="left:1386px;top:324px" width="15" height="14" viewBox="0 0 15 14"><path d="M7.5 0.4 L11.8 4.8 L9 4.8 L9 9.2 L6 9.2 L6 4.8 L3.2 4.8 Z" fill="#444"/><path d="M0.3 10.2 L5 10.2 C5.5 11 6.3 11.3 7.5 11.3 C8.7 11.3 9.5 11 10 10.2 L14.7 10.2 L14.7 13.7 L0.3 13.7 Z" fill="#444"/><rect x="10.6" y="11.8" width="1.1" height="1.1" fill="#fff"/><rect x="12.6" y="11.8" width="1.1" height="1.1" fill="#fff"/></svg>
<svg class="r" style="left:1406px;top:324px" width="12" height="14" viewBox="0 0 12 14"><path d="M4 2.6 C4 0.6 8 0.6 8 2.6" fill="none" stroke="#444" stroke-width="1.3"/><rect x="0.3" y="2.3" width="11.4" height="1.5" fill="#444"/><path d="M1.1 3.6 L10.9 3.6 L10.3 13 C10.3 13.5 10 13.8 9.5 13.8 L2.5 13.8 C2 13.8 1.7 13.5 1.7 13 Z" fill="#444"/><rect x="2.9" y="5.2" width="1.1" height="7" fill="#fff"/><rect x="5.45" y="5.2" width="1.1" height="7" fill="#fff"/><rect x="8" y="5.2" width="1.1" height="7" fill="#fff"/></svg>
<div class="t" style="left:33.00px;width:400px;text-align:center;top:359.65px;font-size:10.1px;line-height:10.1px;color:#5f5f5f;">2017-12-10</div>
<div class="t" style="left:106.00px;width:400px;text-align:center;top:359.65px;font-size:10.1px;line-height:10.1px;color:#5f5f5f;">Novembre</div>
<div class="t" style="left:171.00px;width:400px;text-align:center;top:359.65px;font-size:10.1px;line-height:10.1px;color:#5f5f5f;">2017</div>
<div class="t" style="left:413.60px;top:359.65px;font-size:10.1px;line-height:10.1px;color:#5f5f5f;">Rossi Mario</div>
<div class="t" style="left:825.50px;top:359.65px;font-size:10.1px;line-height:10.1px;color:#5f5f5f;">€</div>
<div class="t" style="right:552.30px;top:359.65px;font-size:10.1px;line-height:10.1px;color:#5f5f5f;">0,00</div>
<div class="t" style="left:917.50px;top:359.65px;font-size:10.1px;line-height:10.1px;color:#5f5f5f;">€</div>
<div class="t" style="right:460.30px;top:359.65px;font-size:10.1px;line-height:10.1px;color:#5f5f5f;">0,00</div>
<div class="t" style="left:1009.50px;top:359.65px;font-size:10.1px;line-height:10.1px;color:#5f5f5f;">€</div>
<div class="t" style="right:368.30px;top:359.65px;font-size:10.1px;line-height:10.1px;color:#5f5f5f;">0,00</div>
<div class="t" style="right:272.20px;top:359.65px;font-size:10.1px;line-height:10.1px;color:#5f5f5f;">-</div>
<div class="t" style="left:1201.50px;top:359.65px;font-size:10.1px;line-height:10.1px;color:#333;font-weight:bold;">€</div>
<div class="t" style="right:176.00px;top:359.65px;font-size:10.1px;line-height:10.1px;color:#333;font-weight:bold;">0,00</div>
<div class="t" style="left:1120.00px;width:400px;text-align:center;top:359.65px;font-size:10.1px;line-height:10.1px;color:#5f5f5f;">-</div>
<svg class="r" style="left:1367px;top:356px" width="14" height="14" viewBox="0 0 14 14"><path d="M11.83 5.71 L13.68 5.72 L13.68 8.28 L11.83 8.29 L11.62 8.91 L11.33 9.51 L12.63 10.81 L10.81 12.63 L9.51 11.33 L8.91 11.62 L8.29 11.83 L8.28 13.68 L5.72 13.68 L5.71 11.83 L5.09 11.62 L4.49 11.33 L3.19 12.63 L1.37 10.81 L2.67 9.51 L2.38 8.91 L2.17 8.29 L0.32 8.28 L0.32 5.72 L2.17 5.71 L2.38 5.09 L2.67 4.49 L1.37 3.19 L3.19 1.37 L4.49 2.67 L5.09 2.38 L5.71 2.17 L5.72 0.32 L8.28 0.32 L8.29 2.17 L8.91 2.38 L9.51 2.67 L10.81 1.37 L12.63 3.19 L11.33 4.49 L11.62 5.09 Z" fill="#444"/><circle cx="7" cy="7" r="2.2" fill="#f8f8f8"/></svg>
<svg class="r" style="left:1386px;top:356px" width="15" height="14" viewBox="0 0 15 14"><path d="M7.5 0.4 L11.8 4.8 L9 4.8 L9 9.2 L6 9.2 L6 4.8 L3.2 4.8 Z" fill="#444"/><path d="M0.3 10.2 L5 10.2 C5.5 11 6.3 11.3 7.5 11.3 C8.7 11.3 9.5 11 10 10.2 L14.7 10.2 L14.7 13.7 L0.3 13.7 Z" fill="#444"/><rect x="10.6" y="11.8" width="1.1" height="1.1" fill="#fff"/><rect x="12.6" y="11.8" width="1.1" height="1.1" fill="#fff"/></svg>
<svg class="r" style="left:1406px;top:356px" width="12" height="14" viewBox="0 0 12 14"><path d="M4 2.6 C4 0.6 8 0.6 8 2.6" fill="none" stroke="#444" stroke-width="1.3"/><rect x="0.3" y="2.3" width="11.4" height="1.5" fill="#444"/><path d="M1.1 3.6 L10.9 3.6 L10.3 13 C10.3 13.5 10 13.8 9.5 13.8 L2.5 13.8 C2 13.8 1.7 13.5 1.7 13 Z" fill="#444"/><rect x="2.9" y="5.2" width="1.1" height="7" fill="#fff"/><rect x="5.45" y="5.2" width="1.1" height="7" fill="#fff"/><rect x="8" y="5.2" width="1.1" height="7" fill="#fff"/></svg>
<div class="t" style="left:33.00px;width:400px;text-align:center;top:391.85px;font-size:10.1px;line-height:10.1px;color:#5f5f5f;">2017-12-10</div>
<div class="t" style="left:106.00px;width:400px;text-align:center;top:391.85px;font-size:10.1px;line-height:10.1px;color:#5f5f5f;">Novembre</div>
<div class="t" style="left:171.00px;width:400px;text-align:center;top:391.85px;font-size:10.1px;line-height:10.1px;color:#5f5f5f;">2017</div>
<div class="t" style="left:413.60px;top:391.85px;font-size:10.1px;line-height:10.1px;color:#5f5f5f;">Rossi Mario</div>
<div class="t" style="left:825.50px;top:391.85px;font-size:10.1px;line-height:10.1px;color:#5f5f5f;">€</div>
<div class="t" style="right:552.30px;top:391.85px;font-size:10.1px;line-height:10.1px;color:#5f5f5f;">0,00</div>
<div class="t" style="left:917.50px;top:391.85px;font-size:10.1px;line-height:10.1px;color:#5f5f5f;">€</div>
<div class="t" style="right:460.30px;top:391.85px;font-size:10.1px;line-height:10.1px;color:#5f5f5f;">0,00</div>
<div class="t" style="left:1009.50px;top:391.85px;font-size:10.1px;line-height:10.1px;color:#5f5f5f;">€</div>
<div class="t" style="right:368.30px;top:391.85px;font-size:10.1px;line-height:10.1px;color:#5f5f5f;">0,00</div>
<div class="t" style="right:272.20px;top:391.85px;font-size:10.1px;line-height:10.1px;color:#5f5f5f;">-</div>
<div class="t" style="left:1201.50px;top:391.85px;font-size:10.1px;line-height:10.1px;color:#333;font-weight:bold;">€</div>
<div class="t" style="right:176.00px;top:391.85px;font-size:10.1px;line-height:10.1px;color:#333;font-weight:bold;">0,00</div>
<div class="t" style="left:1120.00px;width:400px;text-align:center;top:391.85px;font-size:10.1px;line-height:10.1px;color:#5f5f5f;">-</div>
<svg class="r" style="left:1367px;top:388px" width="14" height="14" viewBox="0 0 14 14"><path d="M11.83 5.71 L13.68 5.72 L13.68 8.28 L11.83 8.29 L11.62 8.91 L11.33 9.51 L12.63 10.81 L10.81 12.63 L9.51 11.33 L8.91 11.62 L8.29 11.83 L8.28 13.68 L5.72 13.68 L5.71 11.83 L5.09 11.62 L4.49 11.33 L3.19 12.63 L1.37 10.81 L2.67 9.51 L2.38 8.91 L2.17 8.29 L0.32 8.28 L0.32 5.72 L2.17 5.71 L2.38 5.09 L2.67 4.49 L1.37 3.19 L3.19 1.37 L4.49 2.67 L5.09 2.38 L5.71 2.17 L5.72 0.32 L8.28 0.32 L8.29 2.17 L8.91 2.38 L9.51 2.67 L10.81 1.37 L12.63 3.19 L11.33 4.49 L11.62 5.09 Z" fill="#444"/><circle cx="7" cy="7" r="2.2" fill="#ffffff"/></svg>
<svg class="r" style="left:1386px;top:388px" width="15" height="14" viewBox="0 0 15 14"><path d="M7.5 0.4 L11.8 4.8 L9 4.8 L9 9.2 L6 9.2 L6 4.8 L3.2 4.8 Z" fill="#444"/><path d="M0.3 10.2 L5 10.2 C5.5 11 6.3 11.3 7.5 11.3 C8.7 11.3 9.5 11 10 10.2 L14.7 10.2 L14.7 13.7 L0.3 13.7 Z" fill="#444"/><rect x="10.6" y="11.8" width="1.1" height="1.1" fill="#fff"/><rect x="12.6" y="11.8" width="1.1" height="1.1" fill="#fff"/></svg>
<svg class="r" style="left:1406px;top:388px" width="12" height="14" viewBox="0 0 12 14"><path d="M4 2.6 C4 0.6 8 0.6 8 2.6" fill="none" stroke="#444" stroke-width="1.3"/><rect x="0.3" y="2.3" width="11.4" height="1.5" fill="#444"/><path d="M1.1 3.6 L10.9 3.6 L10.3 13 C10.3 13.5 10 13.8 9.5 13.8 L2.5 13.8 C2 13.8 1.7 13.5 1.7 13 Z" fill="#444"/><rect x="2.9" y="5.2" width="1.1" height="7" fill="#fff"/><rect x="5.45" y="5.2" width="1.1" height="7" fill="#fff"/><rect x="8" y="5.2" width="1.1" height="7" fill="#fff"/></svg>
<div class="t" style="left:33.00px;width:400px;text-align:center;top:424.05px;font-size:10.1px;line-height:10.1px;color:#5f5f5f;">2017-11-28</div>
<div class="t" style="left:106.00px;width:400px;text-align:center;top:424.05px;font-size:10.1px;line-height:10.1px;color:#5f5f5f;">Ottobre</div>
<div class="t" style="left:171.00px;width:400px;text-align:center;top:424.05px;font-size:10.1px;line-height:10.1px;color:#5f5f5f;">2017</div>
<div class="t" style="left:413.60px;top:424.05px;font-size:10.1px;line-height:10.1px;color:#5f5f5f;">Rossi Mario</div>
<div class="t" style="left:825.50px;top:424.05px;font-size:10.1px;line-height:10.1px;color:#5f5f5f;">€</div>
<div class="t" style="right:552.30px;top:424.05px;font-size:10.1px;line-height:10.1px;color:#5f5f5f;">0,00</div>
<div class="t" style="left:917.50px;top:424.05px;font-size:10.1px;line-height:10.1px;color:#5f5f5f;">€</div>
<div class="t" style="right:460.30px;top:424.05px;font-size:10.1px;line-height:10.1px;color:#5f5f5f;">0,00</div>
<div class="t" style="left:1009.50px;top:424.05px;font-size:10.1px;line-height:10.1px;color:#5f5f5f;">€</div>
<div class="t" style="right:368.30px;top:424.05px;font-size:10.1px;line-height:10.1px;color:#5f5f5f;">0,00</div>
<div class="t" style="right:272.20px;top:424.05px;font-size:10.1px;line-height:10.1px;color:#5f5f5f;">-</div>
<div class="t" style="left:1201.50px;top:424.05px;font-size:10.1px;line-height:10.1px;color:#333;font-weight:bold;">€</div>
<div class="t" style="right:176.00px;top:424.05px;font-size:10.1px;line-height:10.1px;color:#333;font-weight:bold;">0,00</div>
<div class="t" style="left:1120.00px;width:400px;text-align:center;top:424.05px;font-size:10.1px;line-height:10.1px;color:#5f5f5f;">-</div>
<svg class="r" style="left:1367px;top:421px" width="14" height="14" viewBox="0 0 14 14"><path d="M11.83 5.71 L13.68 5.72 L13.68 8.28 L11.83 8.29 L11.62 8.91 L11.33 9.51 L12.63 10.81 L10.81 12.63 L9.51 11.33 L8.91 11.62 L8.29 11.83 L8.28 13.68 L5.72 13.68 L5.71 11.83 L5.09 11.62 L4.49 11.33 L3.19 12.63 L1.37 10.81 L2.67 9.51 L2.38 8.91 L2.17 8.29 L0.32 8.28 L0.32 5.72 L2.17 5.71 L2.38 5.09 L2.67 4.49 L1.37 3.19 L3.19 1.37 L4.49 2.67 L5.09 2.38 L5.71 2.17 L5.72 0.32 L8.28 0.32 L8.29 2.17 L8.91 2.38 L9.51 2.67 L10.81 1.37 L12.63 3.19 L11.33 4.49 L11.62 5.09 Z" fill="#444"/><circle cx="7" cy="7" r="2.2" fill="#f8f8f8"/></svg>
<svg class="r" style="left:1386px;top:421px" width="15" height="14" viewBox="0 0 15 14"><path d="M7.5 0.4 L11.8 4.8 L9 4.8 L9 9.2 L6 9.2 L6 4.8 L3.2 4.8 Z" fill="#444"/><path d="M0.3 10.2 L5 10.2 C5.5 11 6.3 11.3 7.5 11.3 C8.7 11.3 9.5 11 10 10.2 L14.7 10.2 L14.7 13.7 L0.3 13.7 Z" fill="#444"/><rect x="10.6" y="11.8" width="1.1" height="1.1" fill="#fff"/><rect x="12.6" y="11.8" width="1.1" height="1.1" fill="#fff"/></svg>
<svg class="r" style="left:1406px;top:421px" width="12" height="14" viewBox="0 0 12 14"><path d="M4 2.6 C4 0.6 8 0.6 8 2.6" fill="none" stroke="#444" stroke-width="1.3"/><rect x="0.3" y="2.3" width="11.4" height="1.5" fill="#444"/><path d="M1.1 3.6 L10.9 3.6 L10.3 13 C10.3 13.5 10 13.8 9.5 13.8 L2.5 13.8 C2 13.8 1.7 13.5 1.7 13 Z" fill="#444"/><rect x="2.9" y="5.2" width="1.1" height="7" fill="#fff"/><rect x="5.45" y="5.2" width="1.1" height="7" fill="#fff"/><rect x="8" y="5.2" width="1.1" height="7" fill="#fff"/></svg>
<div class="t" style="left:33.00px;width:400px;text-align:center;top:456.25px;font-size:10.1px;line-height:10.1px;color:#5f5f5f;">2017-11-28</div>
<div class="t" style="left:106.00px;width:400px;text-align:center;top:456.25px;font-size:10.1px;line-height:10.1px;color:#5f5f5f;">Novembre</div>
<div class="t" style="left:171.00px;width:400px;text-align:center;top:456.25px;font-size:10.1px;line-height:10.1px;color:#5f5f5f;">2017</div>
<div class="t" style="left:413.60px;top:456.25px;font-size:10.1px;line-height:10.1px;color:#5f5f5f;">Rossi Mario</div>
<div class="t" style="left:825.50px;top:456.25px;font-size:10.1px;line-height:10.1px;color:#5f5f5f;">€</div>
<div class="t" style="right:552.30px;top:456.25px;font-size:10.1px;line-height:10.1px;color:#5f5f5f;">0,00</div>
<div class="t" style="left:917.50px;top:456.25px;font-size:10.1px;line-height:10.1px;color:#5f5f5f;">€</div>
<div class="t" style="right:460.30px;top:456.25px;font-size:10.1px;line-height:10.1px;color:#5f5f5f;">0,00</div>
<div class="t" style="left:1009.50px;top:456.25px;font-size:10.1px;line-height:10.1px;color:#5f5f5f;">€</div>
<div class="t" style="right:368.30px;top:456.25px;font-size:10.1px;line-height:10.1px;color:#5f5f5f;">0,00</div>
<div class="t" style="right:272.20px;top:456.25px;font-size:10.1px;line-height:10.1px;color:#5f5f5f;">-</div>
<div class="t" style="left:1201.50px;top:456.25px;font-size:10.1px;line-height:10.1px;color:#333;font-weight:bold;">€</div>
<div class="t" style="right:176.00px;top:456.25px;font-size:10.1px;line-height:10.1px;color:#333;font-weight:bold;">0,00</div>
<div class="t" style="left:1120.00px;width:400px;text-align:center;top:456.25px;font-size:10.1px;line-height:10.1px;color:#5f5f5f;">-</div>
<svg class="r" style="left:1367px;top:453px" width="14" height="14" viewBox="0 0 14 14"><path d="M11.83 5.71 L13.68 5.72 L13.68 8.28 L11.83 8.29 L11.62 8.91 L11.33 9.51 L12.63 10.81 L10.81 12.63 L9.51 11.33 L8.91 11.62 L8.29 11.83 L8.28 13.68 L5.72 13.68 L5.71 11.83 L5.09 11.62 L4.49 11.33 L3.19 12.63 L1.37 10.81 L2.67 9.51 L2.38 8.91 L2.17 8.29 L0.32 8.28 L0.32 5.72 L2.17 5.71 L2.38 5.09 L2.67 4.49 L1.37 3.19 L3.19 1.37 L4.49 2.67 L5.09 2.38 L5.71 2.17 L5.72 0.32 L8.28 0.32 L8.29 2.17 L8.91 2.38 L9.51 2.67 L10.81 1.37 L12.63 3.19 L11.33 4.49 L11.62 5.09 Z" fill="#444"/><circle cx="7" cy="7" r="2.2" fill="#ffffff"/></svg>
<svg class="r" style="left:1386px;top:453px" width="15" height="14" viewBox="0 0 15 14"><path d="M7.5 0.4 L11.8 4.8 L9 4.8 L9 9.2 L6 9.2 L6 4.8 L3.2 4.8 Z" fill="#444"/><path d="M0.3 10.2 L5 10.2 C5.5 11 6.3 11.3 7.5 11.3 C8.7 11.3 9.5 11 10 10.2 L14.7 10.2 L14.7 13.7 L0.3 13.7 Z" fill="#444"/><rect x="10.6" y="11.8" width="1.1" height="1.1" fill="#fff"/><rect x="12.6" y="11.8" width="1.1" height="1.1" fill="#fff"/></svg>
<svg class="r" style="left:1406px;top:453px" width="12" height="14" viewBox="0 0 12 14"><path d="M4 2.6 C4 0.6 8 0.6 8 2.6" fill="none" stroke="#444" stroke-width="1.3"/><rect x="0.3" y="2.3" width="11.4" height="1.5" fill="#444"/><path d="M1.1 3.6 L10.9 3.6 L10.3 13 C10.3 13.5 10 13.8 9.5 13.8 L2.5 13.8 C2 13.8 1.7 13.5 1.7 13 Z" fill="#444"/><rect x="2.9" y="5.2" width="1.1" height="7" fill="#fff"/><rect x="5.45" y="5.2" width="1.1" height="7" fill="#fff"/><rect x="8" y="5.2" width="1.1" height="7" fill="#fff"/></svg>
<div class="t" style="left:33.00px;width:400px;text-align:center;top:488.45px;font-size:10.1px;line-height:10.1px;color:#5f5f5f;">2017-11-29</div>
<div class="t" style="left:106.00px;width:400px;text-align:center;top:488.45px;font-size:10.1px;line-height:10.1px;color:#5f5f5f;">Novembre</div>
<div class="t" style="left:171.00px;width:400px;text-align:center;top:488.45px;font-size:10.1px;line-height:10.1px;color:#5f5f5f;">2017</div>
<div class="t" style="left:413.60px;top:488.45px;font-size:10.1px;line-height:10.1px;color:#5f5f5f;">Rossi Mario</div>
<div class="t" style="left:825.50px;top:488.45px;font-size:10.1px;line-height:10.1px;color:#5f5f5f;">€</div>
<div class="t" style="right:552.30px;top:488.45px;font-size:10.1px;line-height:10.1px;color:#5f5f5f;">0,00</div>
<div class="t" style="left:917.50px;top:488.45px;font-size:10.1px;line-height:10.1px;color:#5f5f5f;">€</div>
<div class="t" style="right:460.30px;top:488.45px;font-size:10.1px;line-height:10.1px;color:#5f5f5f;">0,00</div>
<div class="t" style="left:1009.50px;top:488.45px;font-size:10.1px;line-height:10.1px;color:#5f5f5f;">€</div>
<div class="t" style="right:368.30px;top:488.45px;font-size:10.1px;line-height:10.1px;color:#5f5f5f;">0,00</div>
<div class="t" style="right:272.20px;top:488.45px;font-size:10.1px;line-height:10.1px;color:#5f5f5f;">-</div>
<div class="t" style="left:1201.50px;top:488.45px;font-size:10.1px;line-height:10.1px;color:#333;font-weight:bold;">€</div>
<div class="t" style="right:176.00px;top:488.45px;font-size:10.1px;line-height:10.1px;color:#333;font-weight:bold;">0,00</div>
<div class="t" style="left:1120.00px;width:400px;text-align:center;top:488.45px;font-size:10.1px;line-height:10.1px;color:#5f5f5f;">-</div>
<svg class="r" style="left:1367px;top:485px" width="14" height="14" viewBox="0 0 14 14"><path d="M11.83 5.71 L13.68 5.72 L13.68 8.28 L11.83 8.29 L11.62 8.91 L11.33 9.51 L12.63 10.81 L10.81 12.63 L9.51 11.33 L8.91 11.62 L8.29 11.83 L8.28 13.68 L5.72 13.68 L5.71 11.83 L5.09 11.62 L4.49 11.33 L3.19 12.63 L1.37 10.81 L2.67 9.51 L2.38 8.91 L2.17 8.29 L0.32 8.28 L0.32 5.72 L2.17 5.71 L2.38 5.09 L2.67 4.49 L1.37 3.19 L3.19 1.37 L4.49 2.67 L5.09 2.38 L5.71 2.17 L5.72 0.32 L8.28 0.32 L8.29 2.17 L8.91 2.38 L9.51 2.67 L10.81 1.37 L12.63 3.19 L11.33 4.49 L11.62 5.09 Z" fill="#444"/><circle cx="7" cy="7" r="2.2" fill="#f8f8f8"/></svg>
<svg class="r" style="left:1386px;top:485px" width="15" height="14" viewBox="0 0 15 14"><path d="M7.5 0.4 L11.8 4.8 L9 4.8 L9 9.2 L6 9.2 L6 4.8 L3.2 4.8 Z" fill="#444"/><path d="M0.3 10.2 L5 10.2 C5.5 11 6.3 11.3 7.5 11.3 C8.7 11.3 9.5 11 10 10.2 L14.7 10.2 L14.7 13.7 L0.3 13.7 Z" fill="#444"/><rect x="10.6" y="11.8" width="1.1" height="1.1" fill="#fff"/><rect x="12.6" y="11.8" width="1.1" height="1.1" fill="#fff"/></svg>
<svg class="r" style="left:1406px;top:485px" width="12" height="14" viewBox="0 0 12 14"><path d="M4 2.6 C4 0.6 8 0.6 8 2.6" fill="none" stroke="#444" stroke-width="1.3"/><rect x="0.3" y="2.3" width="11.4" height="1.5" fill="#444"/><path d="M1.1 3.6 L10.9 3.6 L10.3 13 C10.3 13.5 10 13.8 9.5 13.8 L2.5 13.8 C2 13.8 1.7 13.5 1.7 13 Z" fill="#444"/><rect x="2.9" y="5.2" width="1.1" height="7" fill="#fff"/><rect x="5.45" y="5.2" width="1.1" height="7" fill="#fff"/><rect x="8" y="5.2" width="1.1" height="7" fill="#fff"/></svg>
<div class="t" style="left:33.00px;width:400px;text-align:center;top:520.65px;font-size:10.1px;line-height:10.1px;color:#5f5f5f;">2017-11-30</div>
<div class="t" style="left:106.00px;width:400px;text-align:center;top:520.65px;font-size:10.1px;line-height:10.1px;color:#5f5f5f;">Novembre</div>
<div class="t" style="left:171.00px;width:400px;text-align:center;top:520.65px;font-size:10.1px;line-height:10.1px;color:#5f5f5f;">2017</div>
<div class="t" style="left:413.60px;top:520.65px;font-size:10.1px;line-height:10.1px;color:#5f5f5f;">Rossi Mario</div>
<div class="t" style="left:825.50px;top:520.65px;font-size:10.1px;line-height:10.1px;color:#5f5f5f;">€</div>
<div class="t" style="right:552.30px;top:520.65px;font-size:10.1px;line-height:10.1px;color:#5f5f5f;">0,00</div>
<div class="t" style="left:917.50px;top:520.65px;font-size:10.1px;line-height:10.1px;color:#5f5f5f;">€</div>
<div class="t" style="right:460.30px;top:520.65px;font-size:10.1px;line-height:10.1px;color:#5f5f5f;">0,00</div>
<div class="t" style="left:1009.50px;top:520.65px;font-size:10.1px;line-height:10.1px;color:#5f5f5f;">€</div>
<div class="t" style="right:368.30px;top:520.65px;font-size:10.1px;line-height:10.1px;color:#5f5f5f;">0,00</div>
<div class="t" style="right:272.20px;top:520.65px;font-size:10.1px;line-height:10.1px;color:#5f5f5f;">-</div>
<div class="t" style="left:1201.50px;top:520.65px;font-size:10.1px;line-height:10.1px;color:#333;font-weight:bold;">€</div>
<div class="t" style="right:176.00px;top:520.65px;font-size:10.1px;line-height:10.1px;color:#333;font-weight:bold;">0,00</div>
<div class="t" style="left:1120.00px;width:400px;text-align:center;top:520.65px;font-size:10.1px;line-height:10.1px;color:#5f5f5f;">-</div>
<svg class="r" style="left:1367px;top:517px" width="14" height="14" viewBox="0 0 14 14"><path d="M11.83 5.71 L13.68 5.72 L13.68 8.28 L11.83 8.29 L11.62 8.91 L11.33 9.51 L12.63 10.81 L10.81 12.63 L9.51 11.33 L8.91 11.62 L8.29 11.83 L8.28 13.68 L5.72 13.68 L5.71 11.83 L5.09 11.62 L4.49 11.33 L3.19 12.63 L1.37 10.81 L2.67 9.51 L2.38 8.91 L2.17 8.29 L0.32 8.28 L0.32 5.72 L2.17 5.71 L2.38 5.09 L2.67 4.49 L1.37 3.19 L3.19 1.37 L4.49 2.67 L5.09 2.38 L5.71 2.17 L5.72 0.32 L8.28 0.32 L8.29 2.17 L8.91 2.38 L9.51 2.67 L10.81 1.37 L12.63 3.19 L11.33 4.49 L11.62 5.09 Z" fill="#444"/><circle cx="7" cy="7" r="2.2" fill="#ffffff"/></svg>
<svg class="r" style="left:1386px;top:517px" width="15" height="14" viewBox="0 0 15 14"><path d="M7.5 0.4 L11.8 4.8 L9 4.8 L9 9.2 L6 9.2 L6 4.8 L3.2 4.8 Z" fill="#444"/><path d="M0.3 10.2 L5 10.2 C5.5 11 6.3 11.3 7.5 11.3 C8.7 11.3 9.5 11 10 10.2 L14.7 10.2 L14.7 13.7 L0.3 13.7 Z" fill="#444"/><rect x="10.6" y="11.8" width="1.1" height="1.1" fill="#fff"/><rect x="12.6" y="11.8" width="1.1" height="1.1" fill="#fff"/></svg>
<svg class="r" style="left:1406px;top:517px" width="12" height="14" viewBox="0 0 12 14"><path d="M4 2.6 C4 0.6 8 0.6 8 2.6" fill="none" stroke="#444" stroke-width="1.3"/><rect x="0.3" y="2.3" width="11.4" height="1.5" fill="#444"/><path d="M1.1 3.6 L10.9 3.6 L10.3 13 C10.3 13.5 10 13.8 9.5 13.8 L2.5 13.8 C2 13.8 1.7 13.5 1.7 13 Z" fill="#444"/><rect x="2.9" y="5.2" width="1.1" height="7" fill="#fff"/><rect x="5.45" y="5.2" width="1.1" height="7" fill="#fff"/><rect x="8" y="5.2" width="1.1" height="7" fill="#fff"/></svg>
<div class="t" style="left:33.00px;width:400px;text-align:center;top:552.85px;font-size:10.1px;line-height:10.1px;color:#5f5f5f;">2017-11-30</div>
<div class="t" style="left:106.00px;width:400px;text-align:center;top:552.85px;font-size:10.1px;line-height:10.1px;color:#5f5f5f;">Novembre</div>
<div class="t" style="left:171.00px;width:400px;text-align:center;top:552.85px;font-size:10.1px;line-height:10.1px;color:#5f5f5f;">2017</div>
<div class="t" style="left:413.60px;top:552.85px;font-size:10.1px;line-height:10.1px;color:#5f5f5f;">Rossi Mario</div>
<div class="t" style="left:825.50px;top:552.85px;font-size:10.1px;line-height:10.1px;color:#5f5f5f;">€</div>
<div class="t" style="right:552.30px;top:552.85px;font-size:10.1px;line-height:10.1px;color:#5f5f5f;">0,00</div>
<div class="t" style="left:917.50px;top:552.85px;font-size:10.1px;line-height:10.1px;color:#5f5f5f;">€</div>
<div class="t" style="right:460.30px;top:552.85px;font-size:10.1px;line-height:10.1px;color:#5f5f5f;">0,00</div>
<div class="t" style="left:1009.50px;top:552.85px;font-size:10.1px;line-height:10.1px;color:#5f5f5f;">€</div>
<div class="t" style="right:368.30px;top:552.85px;font-size:10.1px;line-height:10.1px;color:#5f5f5f;">0,00</div>
<div class="t" style="right:272.20px;top:552.85px;font-size:10.1px;line-height:10.1px;color:#5f5f5f;">-</div>
<div class="t" style="left:1201.50px;top:552.85px;font-size:10.1px;line-height:10.1px;color:#333;font-weight:bold;">€</div>
<div class="t" style="right:176.00px;top:552.85px;font-size:10.1px;line-height:10.1px;color:#333;font-weight:bold;">0,00</div>
<div class="t" style="left:1120.00px;width:400px;text-align:center;top:552.85px;font-size:10.1px;line-height:10.1px;color:#5f5f5f;">-</div>
<svg class="r" style="left:1367px;top:549px" width="14" height="14" viewBox="0 0 14 14"><path d="M11.83 5.71 L13.68 5.72 L13.68 8.28 L11.83 8.29 L11.62 8.91 L11.33 9.51 L12.63 10.81 L10.81 12.63 L9.51 11.33 L8.91 11.62 L8.29 11.83 L8.28 13.68 L5.72 13.68 L5.71 11.83 L5.09 11.62 L4.49 11.33 L3.19 12.63 L1.37 10.81 L2.67 9.51 L2.38 8.91 L2.17 8.29 L0.32 8.28 L0.32 5.72 L2.17 5.71 L2.38 5.09 L2.67 4.49 L1.37 3.19 L3.19 1.37 L4.49 2.67 L5.09 2.38 L5.71 2.17 L5.72 0.32 L8.28 0.32 L8.29 2.17 L8.91 2.38 L9.51 2.67 L10.81 1.37 L12.63 3.19 L11.33 4.49 L11.62 5.09 Z" fill="#444"/><circle cx="7" cy="7" r="2.2" fill="#f8f8f8"/></svg>
<svg class="r" style="left:1386px;top:549px" width="15" height="14" viewBox="0 0 15 14"><path d="M7.5 0.4 L11.8 4.8 L9 4.8 L9 9.2 L6 9.2 L6 4.8 L3.2 4.8 Z" fill="#444"/><path d="M0.3 10.2 L5 10.2 C5.5 11 6.3 11.3 7.5 11.3 C8.7 11.3 9.5 11 10 10.2 L14.7 10.2 L14.7 13.7 L0.3 13.7 Z" fill="#444"/><rect x="10.6" y="11.8" width="1.1" height="1.1" fill="#fff"/><rect x="12.6" y="11.8" width="1.1" height="1.1" fill="#fff"/></svg>
<svg class="r" style="left:1406px;top:549px" width="12" height="14" viewBox="0 0 12 14"><path d="M4 2.6 C4 0.6 8 0.6 8 2.6" fill="none" stroke="#444" stroke-width="1.3"/><rect x="0.3" y="2.3" width="11.4" height="1.5" fill="#444"/><path d="M1.1 3.6 L10.9 3.6 L10.3 13 C10.3 13.5 10 13.8 9.5 13.8 L2.5 13.8 C2 13.8 1.7 13.5 1.7 13 Z" fill="#444"/><rect x="2.9" y="5.2" width="1.1" height="7" fill="#fff"/><rect x="5.45" y="5.2" width="1.1" height="7" fill="#fff"/><rect x="8" y="5.2" width="1.1" height="7" fill="#fff"/></svg>
<div class="t" style="left:33.00px;width:400px;text-align:center;top:585.05px;font-size:10.1px;line-height:10.1px;color:#5f5f5f;">2017-11-09</div>
<div class="t" style="left:106.00px;width:400px;text-align:center;top:585.05px;font-size:10.1px;line-height:10.1px;color:#5f5f5f;">Febbraio</div>
<div class="t" style="left:171.00px;width:400px;text-align:center;top:585.05px;font-size:10.1px;line-height:10.1px;color:#5f5f5f;">0</div>
<div class="t" style="left:413.60px;top:585.05px;font-size:10.1px;line-height:10.1px;color:#5f5f5f;">Rossi Mario</div>
<div class="t" style="left:825.50px;top:585.05px;font-size:10.1px;line-height:10.1px;color:#5f5f5f;">€</div>
<div class="t" style="right:552.30px;top:585.05px;font-size:10.1px;line-height:10.1px;color:#5f5f5f;">0,00</div>
<div class="t" style="left:917.50px;top:585.05px;font-size:10.1px;line-height:10.1px;color:#5f5f5f;">€</div>
<div class="t" style="right:460.30px;top:585.05px;font-size:10.1px;line-height:10.1px;color:#5f5f5f;">0,00</div>
<div class="t" style="left:1009.50px;top:585.05px;font-size:10.1px;line-height:10.1px;color:#5f5f5f;">€</div>
<div class="t" style="right:368.30px;top:585.05px;font-size:10.1px;line-height:10.1px;color:#5f5f5f;">0,00</div>
<div class="t" style="right:272.20px;top:585.05px;font-size:10.1px;line-height:10.1px;color:#5f5f5f;">-</div>
<div class="t" style="left:1201.50px;top:585.05px;font-size:10.1px;line-height:10.1px;color:#333;font-weight:bold;">€</div>
<div class="t" style="right:176.00px;top:585.05px;font-size:10.1px;line-height:10.1px;color:#333;font-weight:bold;">0,00</div>
<div class="t" style="left:1120.00px;width:400px;text-align:center;top:585.05px;font-size:10.1px;line-height:10.1px;color:#5f5f5f;">-</div>
<svg class="r" style="left:1367px;top:582px" width="14" height="14" viewBox="0 0 14 14"><path d="M11.83 5.71 L13.68 5.72 L13.68 8.28 L11.83 8.29 L11.62 8.91 L11.33 9.51 L12.63 10.81 L10.81 12.63 L9.51 11.33 L8.91 11.62 L8.29 11.83 L8.28 13.68 L5.72 13.68 L5.71 11.83 L5.09 11.62 L4.49 11.33 L3.19 12.63 L1.37 10.81 L2.67 9.51 L2.38 8.91 L2.17 8.29 L0.32 8.28 L0.32 5.72 L2.17 5.71 L2.38 5.09 L2.67 4.49 L1.37 3.19 L3.19 1.37 L4.49 2.67 L5.09 2.38 L5.71 2.17 L5.72 0.32 L8.28 0.32 L8.29 2.17 L8.91 2.38 L9.51 2.67 L10.81 1.37 L12.63 3.19 L11.33 4.49 L11.62 5.09 Z" fill="#444"/><circle cx="7" cy="7" r="2.2" fill="#ffffff"/></svg>
<svg class="r" style="left:1386px;top:582px" width="15" height="14" viewBox="0 0 15 14"><path d="M7.5 0.4 L11.8 4.8 L9 4.8 L9 9.2 L6 9.2 L6 4.8 L3.2 4.8 Z" fill="#444"/><path d="M0.3 10.2 L5 10.2 C5.5 11 6.3 11.3 7.5 11.3 C8.7 11.3 9.5 11 10 10.2 L14.7 10.2 L14.7 13.7 L0.3 13.7 Z" fill="#444"/><rect x="10.6" y="11.8" width="1.1" height="1.1" fill="#fff"/><rect x="12.6" y="11.8" width="1.1" height="1.1" fill="#fff"/></svg>
<svg class="r" style="left:1406px;top:582px" width="12" height="14" viewBox="0 0 12 14"><path d="M4 2.6 C4 0.6 8 0.6 8 2.6" fill="none" stroke="#444" stroke-width="1.3"/><rect x="0.3" y="2.3" width="11.4" height="1.5" fill="#444"/><path d="M1.1 3.6 L10.9 3.6 L10.3 13 C10.3 13.5 10 13.8 9.5 13.8 L2.5 13.8 C2 13.8 1.7 13.5 1.7 13 Z" fill="#444"/><rect x="2.9" y="5.2" width="1.1" height="7" fill="#fff"/><rect x="5.45" y="5.2" width="1.1" height="7" fill="#fff"/><rect x="8" y="5.2" width="1.1" height="7" fill="#fff"/></svg>
<svg class="r" style="left:1300px;top:300px" width="140" height="60" viewBox="0 0 140 60"><rect x="15.5" y="27" width="48" height="7.2" fill="#ff0000"/><path d="M62 20 L83.5 30.5 L62 41 Z" fill="#ff0000"/><circle cx="111.2" cy="29.8" r="17.4" fill="none" stroke="#ff0000" stroke-width="6.6"/></svg>
</body></html>
